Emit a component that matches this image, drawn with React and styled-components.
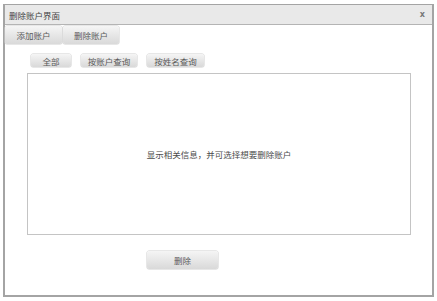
import React from "react"
import styled, { createGlobalStyle } from "styled-components"

const Global = createGlobalStyle`
  html, body {
    margin: 0;
    padding: 0;
    background: #ffffff;
    font-family: "Noto Sans CJK SC", "Liberation Sans", sans-serif;
  }
`

const Window = styled.div`
  box-sizing: border-box;
  margin: 4px 0 0 3px;
  width: 431px;
  height: 293px;
  border: 1px solid #a4a4a4;
  border-right-width: 2px;
  border-bottom-width: 2px;
  border-left-width: 2px;
  background: #fff;
  display: flex;
  flex-direction: column;
`

const TitleBar = styled.div`
  height: 20px;
  box-sizing: border-box;
  background: #e9e9e9;
  border-bottom: 1px solid #b4b4b4;
  display: flex;
  align-items: center;
  justify-content: space-between;
  padding: 0 7px 0 4px;
  font-size: 8.5px;
  color: #444;
`

const Close = styled.span`
  font-family: "DejaVu Sans", sans-serif;
  font-size: 8px;
  font-weight: bold;
  color: #777;
  line-height: 1;
`

const Toolbar = styled.div`
  display: flex;
  gap: 1px;
  padding: 1px 0 0 0;
`

const Button = styled.button`
  box-sizing: border-box;
  width: ${p => p.$w}px;
  height: ${p => p.$h}px;
  padding: 0;
  border: none;
  border-radius: 2px;
  background: linear-gradient(#f5f5f5, #d9d9d9);
  box-shadow: 0 0 0 0.5px #cfcfcf;
  font-family: inherit;
  font-size: 8.5px;
  color: #5a5a5a;
  display: flex;
  align-items: center;
  justify-content: center;
`

const FilterRow = styled.div`
  display: flex;
  margin: 10px 0 0 26px;
  gap: 10px;
`

const ListBox = styled.div`
  box-sizing: border-box;
  margin: 6px 0 0 22px;
  width: 384px;
  height: 162px;
  border: 1px solid #c4c4c4;
  display: flex;
  align-items: center;
  justify-content: center;
  font-size: 8.5px;
  color: #4a4a4a;
`

const Footer = styled.div`
  display: flex;
  margin: 16px 0 0 142px;
`

export default function App() {
  return (
    <>
      <Global />
      <Window>
        <TitleBar>
          <span>删除账户界面</span>
          <Close>x</Close>
        </TitleBar>
        <Toolbar>
          <Button $w={57} $h={18}>添加账户</Button>
          <Button $w={56} $h={18}>删除账户</Button>
        </Toolbar>
        <FilterRow>
          <Button $w={40} $h={13}>全部</Button>
          <Button $w={56} $h={13}>按账户查询</Button>
          <Button $w={57} $h={13}>按姓名查询</Button>
        </FilterRow>
        <ListBox>显示相关信息，并可选择想要删除账户</ListBox>
        <Footer>
          <Button $w={71} $h={18}>删除</Button>
        </Footer>
      </Window>
    </>
  )
}
